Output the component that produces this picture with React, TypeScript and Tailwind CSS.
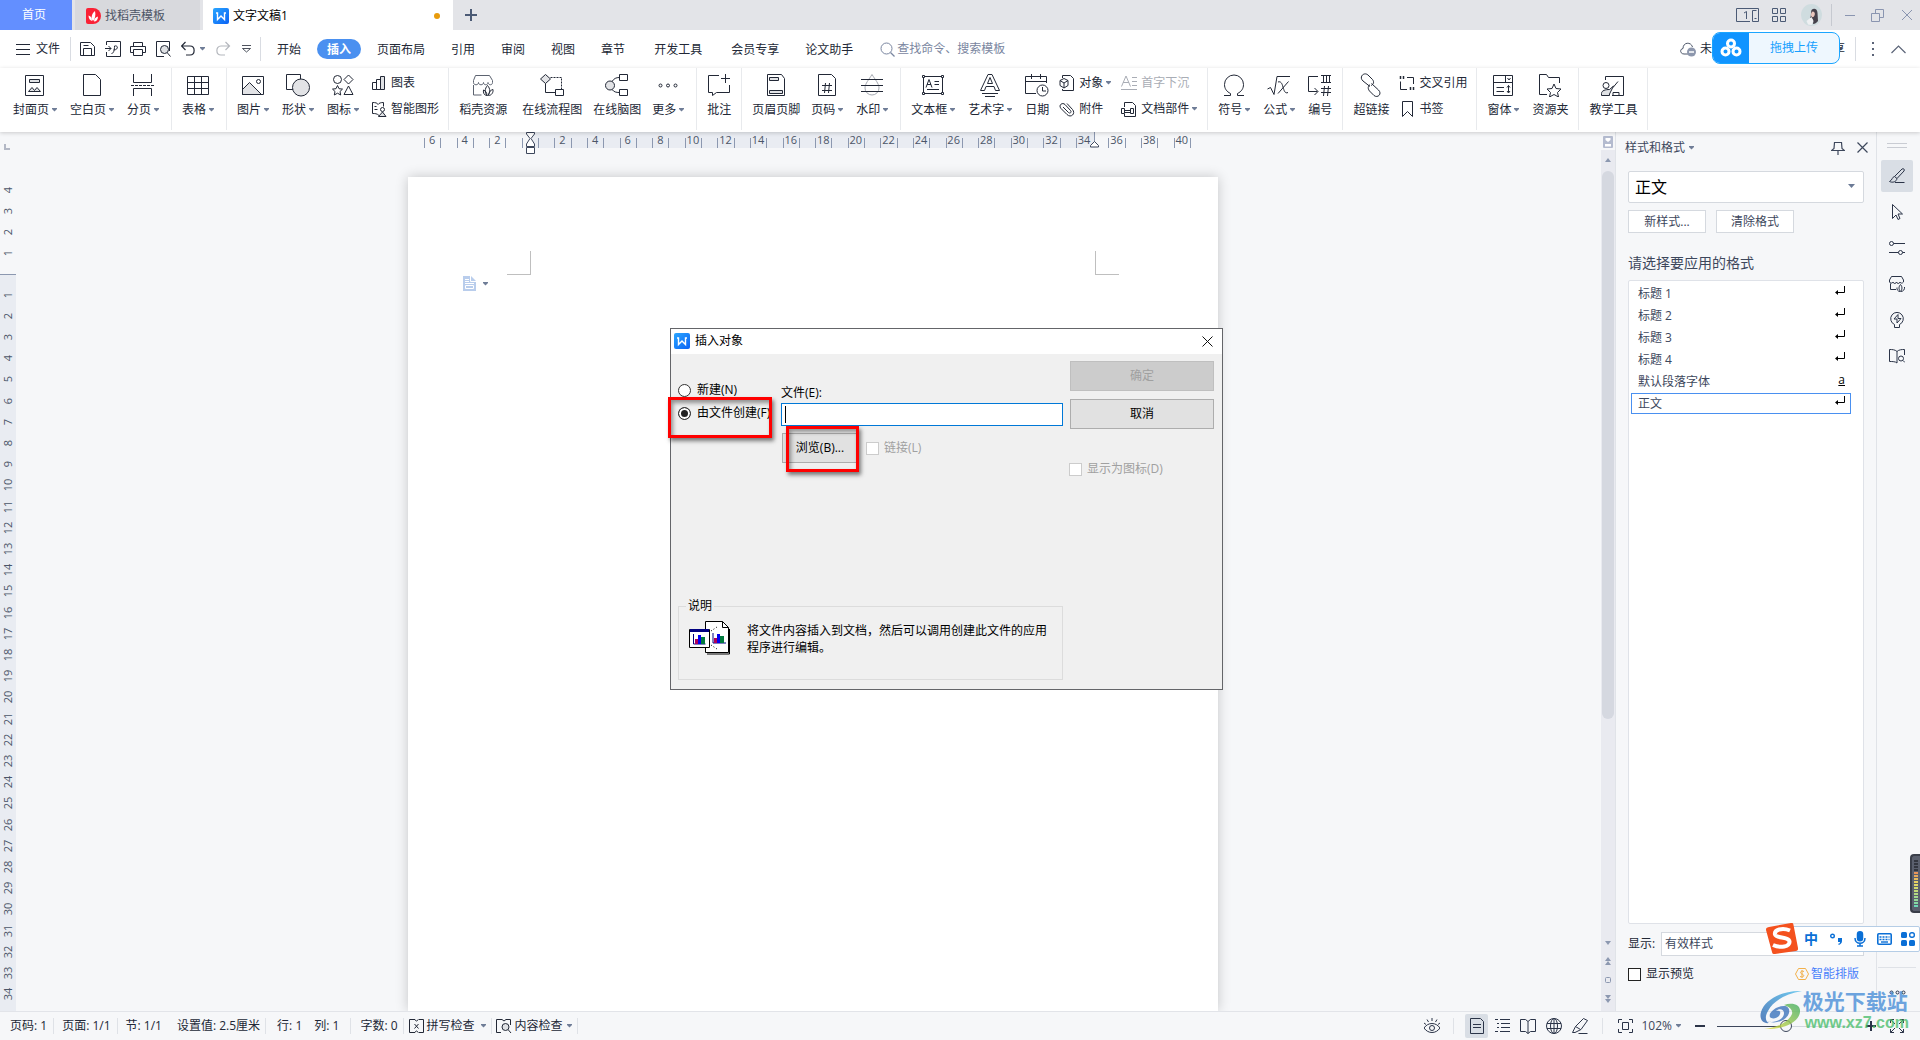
import React, { useState } from "react";
import type { ReactNode } from "react";

type SvgProps = { children: ReactNode; className?: string };

const Icon24 = ({ children, className = "" }: SvgProps) => (
  <svg
    width="24"
    height="24"
    viewBox="0 0 24 24"
    fill="none"
    stroke="currentColor"
    className={"shrink-0 " + className}
  >
    {children}
  </svg>
);

const Icon16 = ({ children, className = "" }: SvgProps) => (
  <svg
    width="16"
    height="16"
    viewBox="0 0 16 16"
    fill="none"
    stroke="currentColor"
    className={"shrink-0 " + className}
  >
    {children}
  </svg>
);

const Caret = ({ className = "" }: { className?: string }) => (
  <svg
    width="5"
    height="4"
    viewBox="0 0 5 4"
    className={"shrink-0 fill-[#6f7d97] " + className}
  >
    <path d="M0 0h5v1L2.5 3.5 0 1z" />
  </svg>
);

const WpsLogo = () => (
  <svg width="16" height="16" viewBox="0 0 16 16" className="shrink-0">
    <defs>
      <linearGradient id="wps" x1="0" y1="0" x2="1" y2="1">
        <stop offset="0" stopColor="#2aa6ff" />
        <stop offset="1" stopColor="#0a62f5" />
      </linearGradient>
    </defs>
    <rect width="16" height="16" rx="2" fill="url(#wps)" />
    <path
      d="M3 5h1.5v6.5L8 8l3.500 3.500V5H13"
      fill="none"
      stroke="#fff"
      strokeWidth="1.4"
    />
  </svg>
);

/* ---------- ribbon ---------- */

type BigProps = {
  label: string;
  caret?: boolean;
  className?: string;
  children: ReactNode;
};

const Big = ({ label, caret, className = "", children }: BigProps) => (
  <button
    type="button"
    className={
      "flex shrink-0 flex-col items-center gap-[5px] pt-[5px] pl-[5px] " +
      (caret ? "pr-2 " : "pr-1.5 ") +
      className
    }
  >
    <Icon24>{children}</Icon24>
    <span className="flex items-center leading-4 whitespace-nowrap">
      {label}
      {caret && <Caret className="ml-[3px]" />}
    </span>
  </button>
);

type SmallProps = {
  label: string;
  caret?: boolean;
  disabled?: boolean;
  children: ReactNode;
};

const Small = ({ label, caret, disabled, children }: SmallProps) => (
  <button
    type="button"
    disabled={disabled}
    className="flex h-5 items-center gap-1 pr-[5px] pl-1 disabled:text-[#a9adb5]"
  >
    <Icon16>{children}</Icon16>
    <span className="flex items-center leading-4 whitespace-nowrap">
      {label}
      {caret && <Caret className="mr-px ml-[3px]" />}
    </span>
  </button>
);

const Group = ({ children }: { children: ReactNode }) => (
  <div className="flex h-[62px] shrink-0 border-r border-[#e8eaed] pr-1 pl-[5px]">
    {children}
  </div>
);

const Stack = ({ children }: { children: ReactNode }) => (
  <div className="flex flex-col items-start gap-1.5 pt-[5px]">{children}</div>
);

const Ribbon = () => (
  <div className="relative z-10 flex h-16 shrink-0 bg-white pl-[3px] shadow-[0_1px_4px_rgba(0,0,0,0.18)]">
    <Group>
      <Big label="封面页" caret>
        <path d="M2.5 2.5h18v20h-18z" />
        <path d="M6.5 6.5h10v3h-10z" fill="#dfe1e4" />
        <path d="M5.5 18.500l3.500-4 2.500 3 2.500-3 3.500 4z" fill="#dfe1e4" />
      </Big>
      <Big label="空白页" caret>
        <path d="M3.5 1.5h12l5 5v16h-17z" />
      </Big>
      <Big label="分页" caret>
        <path d="M2.5 1v8.5h18V1M2.5 23v-7.5h18V23" />
        <path d="M0 12.5h24" strokeDasharray="3 1" />
      </Big>
    </Group>
    <Group>
      <Big label="表格" caret>
        <path d="M1.5 3.5h21v18h-21zM1.5 9.5h21M1.5 15.5h21M8.5 3.5v18M15.5 3.5v18" />
      </Big>
    </Group>
    <Group>
      <Big label="图片" caret>
        <path d="M1.5 16.5l7-7 12 12h-19z" fill="#e2e3e6" />
        <path d="M1.5 3.5h21v18h-21z" />
        <circle cx="17.5" cy="8.5" r="2" />
      </Big>
      <Big label="形状" caret>
        <path d="M.5 1.5h14v15H.5z" />
        <circle cx="15" cy="14.5" r="8.5" fill="#e2e3e6" />
      </Big>
      <Big label="图标" caret>
        <circle cx="6.5" cy="6.5" r="4" />
        <path d="M17.5 2l4.5 4.5-4.5 4.5L13 6.5zM17.5 13l4.500 8.500h-9zM6.500 12.500L8 15.700l3.500.4L9 18.500l.7 3.500-3.200-1.800L3.300 22l.7-3.500-2.500-2.400 3.500-.4z" />
      </Big>
      <Stack>
        <Small label="图表">
          <path d="M1.5 7.5h4v7h-4zM5.5 4.5h4v10h-4zM9.500 1.500h4v13h-4z" />
          <path d="M10 2h3v12h-3z" fill="#dfe1e4" stroke="none" />
        </Small>
        <Small label="智能图形">
          <path d="M8 14.5c-2-2-4-2-6.500-2v-11c3 0 5 .5 5.500 2 1-1.500 3-2 5.500-2v4M3.500 5.500h2M3.500 8.500h3" />
          <circle cx="11.5" cy="8.5" r="2" />
          <path d="M11.5 11l3.500 4.500H7.500z" fill="#dfe1e4" />
        </Small>
      </Stack>
    </Group>
    <Group>
      <Big label="稻壳资源" className="mr-1">
        <path
          d="M2.5 12v10h8M4.500 2.500h14l3 5v2c0 3-4 3-4.500 0 0 3-4.500 3-4.500 0 0 3-5 3-5 0 0 3-5 3-5 0v-2z"
          stroke="#5c6370"
        />
        <path d="M16.5 22.500c-3-2-3-7 0-10 3 3 3 8 0 10zM16 22.500c-3 0-4-3-3.500-5.500 2 .5 3.500 3 3.500 5.500zM17.500 22.500c3 0 5-3 4.500-6-2.500.5-4.500 3-4.500 6z" />
      </Big>
      <Big label="在线流程图">
        <path d="M5.5 1.5l5 4.5-5 4.5-5-4.5z" fill="#e2e3e6" />
        <path d="M5.5 10.5v9h10M15.500 16.500h8v6h-8z" />
        <path d="M10.5 4.5h11v12" strokeDasharray="2 1" />
      </Big>
      <Big label="在线脑图">
        <circle cx="5" cy="12.5" r="4.5" fill="#e2e3e6" />
        <path d="M14.5 1.5h8v6h-8zM14.500 16.500h8v6h-8zM7 8.500c2-3 4-4 7.500-4M7 16.500c2 2.500 4 3 7.500 3" />
      </Big>
      <Big label="更多" caret>
        <circle cx="4.5" cy="12.5" r="1.5" />
        <circle cx="12" cy="12.5" r="1.5" />
        <circle cx="19.5" cy="12.5" r="1.5" />
      </Big>
    </Group>
    <Group>
      <Big label="批注">
        <path d="M12 2.5H1.500v17h4v3l4-3h13V12M18.500 1v9M14 5.500h9" />
      </Big>
    </Group>
    <Group>
      <Big label="页眉页脚">
        <path d="M3.5 1.5h14l3 4v17h-17z" />
        <path d="M5.5 4.5h9v3h-9zM5.500 17.500h13v3h-13z" fill="#e2e3e6" />
      </Big>
      <Big label="页码" caret>
        <path d="M3.5 1.5h13l4 4v17h-17z" />
        <path d="M7 12.5h10M7 17.500h10M10.500 10l-1 10M14.500 10l-1 10" />
      </Big>
      <Big label="水印" caret>
        <path
          d="M12 1.5c3 5 7 9 7 13.500a7 7 0 0 1-14 0c0-4.500 4-8.500 7-13.500z"
          stroke="#a5a9b1"
        />
        <path d="M1 6.5h22M1 12.5h22M1 18.5h22" />
      </Big>
    </Group>
    <Group>
      <Big label="文本框" caret>
        <path d="M2.5 3.5h19v17h-19zM5 14.500l3-8 3 8M6 11.500h4M13.500 8.500H18M13.500 11.500H18M6 16.500h12" />
        <path
          d="M1.5 2.5h2v2h-2zM20.500 2.500h2v2h-2zM1.500 19.500h2v2h-2zM20.500 19.500h2v2h-2z"
          fill="#fff"
        />
      </Big>
      <Big label="艺术字" caret>
        <path d="M2.5 17.5L10 1.5h4l7.500 16h-4L16 13.500H8l-1.500 4zM9.500 10.500L12 4.500l2.500 6zM4 20.500h16M7 23.500h10" />
      </Big>
      <Big label="日期">
        <path d="M11 20.5H.5v-17h21V10M.5 8.500h21M6.500 1v5M15.500 1v5" />
        <circle cx="17.5" cy="17.5" r="5.5" />
        <path d="M17.5 14v4H21" />
      </Big>
      <Stack>
        <Small label="对象" caret>
          <path d="M3.5 3V.5h8l3 3v12h-11V14" />
          <path d="M5 3.5l4 2v5L5 13l-4-2.500v-5zM1 5.500L5 8l4-2.500M5 8v5" />
        </Small>
        <Small label="附件">
          <path d="M4 6l5.500 5.500c1.500 1.500 3.500-.5 2-2L6 3.500C3.500 1-1 4 2 7.500l6 6c4 4 9-1 5.500-5L8 2.500" />
        </Small>
      </Stack>
      <Stack>
        <Small label="首字下沉" disabled>
          <path d="M.5 11.5L5 1l4.500 10.500M2 7.500h6M11 2.500h5M11 6.500h5M11 10.500h5M0 14.500h16" />
        </Small>
        <Small label="文档部件" caret>
          <path d="M3.5 6V1.500h8l3 3v11h-11V13M.5 7.500h3v5h-3zM9.500 7.500h3v5h-3zM3.500 9.500h6v2h-6z" />
        </Small>
      </Stack>
    </Group>
    <Group>
      <Big label="符号" caret>
        <path d="M2 22.5h6.500v-2c-4-2-6-5-6-9a9.500 9.500 0 0 1 19 0c0 4-2 7-6 9v2H22" />
      </Big>
      <Big label="公式" caret>
        <path d="M.5 16l3-1.500 3.500 7 3-18h13M11 9c3-1 4 1.500 5 5s2 7 5 5.500M21.500 8.500l-10.500 12" />
      </Big>
      <Big label="编号">
        <path d="M10 3.5H.5v15h9M6.500 15l3.500 3.500L6.500 22M13 2.500h10M13 9.500h10M15.500 2.500v7M18.500 2.500v7M21.500 2.500v7M13 15.500h10M13 19.500h10M16.500 13l-1 10M20.500 13l-1 10" />
      </Big>
    </Group>
    <Group>
      <Big label="超链接">
        <path d="M11 13.5L4 8C-.5 4 5-1.500 9 2l4.500 4.500c2 2.500 1 5-1.500 6M12.500 10.500l7 6.500c4 4-1 8.500-4.500 5.500l-4.500-4.500c-2-2.500-1.500-5 .5-6.500" />
      </Big>
      <Stack>
        <Small label="交叉引用">
          <path d="M8 2.5h6.500V9M1.500 6.500v8H8" />
          <path d="M1.5 1v3M4.500 1v3M11.500 12v3M14.500 12v3" strokeWidth="1.5" />
        </Small>
        <Small label="书签">
          <path d="M3.5 .5h10v15l-5-5-5 5z" />
        </Small>
      </Stack>
    </Group>
    <Group>
      <Big label="窗体" caret>
        <path d="M2.5 2.5h19v20h-19zM2.500 9.500h19M14.500 2.500v7M16.500 5l1.500 2 1.500-2M5.500 14.500H13M5.500 18.500H13M17.500 12.500v7M16 14.500l1.500-2 1.500 2M16 18l1.500 2 1.500-2" />
      </Big>
      <Big label="资源夹">
        <path d="M9 21.5H1.500v-20h7l2 3h11V10" />
        <path d="M16 11l2 4.500 5 .5-3.500 3.500 1 4.500-4.500-2.500-4.500 2.500 1-4.500L9 16l5-.5z" />
      </Big>
    </Group>
    <Group>
      <Big label="教学工具">
        <path d="M4.5 7V3.500h18v19H11M17 8.500l-5 6M12 22.500v-3h6v3" />
        <circle cx="5" cy="12.5" r="3" />
        <path d="M.5 22.5v-2c0-3 4-4 8-4l4-3.500-4 8v1.500z" fill="#dfe1e4" />
      </Big>
    </Group>
  </div>
);

/* ---------- title bar and menu ---------- */

const TitleBar = () => (
  <header className="flex h-[30px] shrink-0 bg-[#e3e4e8]">
    <button type="button" className="w-[72px] bg-[#638fff] pr-1 text-white">
      首页
    </button>
    <button
      type="button"
      className="ml-[3px] flex w-[125px] items-center gap-1 bg-[#d8d9dd] pt-px pl-[11px] text-[#4d5566]"
    >
      <svg width="15" height="16" viewBox="0 0 15 16">
        <path d="M2 0h5a8 8 0 0 1 0 16H2a2 2 0 0 1-2-2V2a2 2 0 0 1 2-2z" fill="#fa2236" />
        <path
          d="M7 13C5 11 5 6 9 3c1 4 0 8-2 10zM6 13c-2-.5-3.500-2.500-3.500-5.500C5 8 6 10 6 13zM8 13.500c0-2.500 1.500-4.500 4-5 0 3-1.500 5-4 5z"
          fill="#fff"
        />
      </svg>
      找稻壳模板
    </button>
    <button
      type="button"
      className="ml-[3px] flex w-[250px] items-center gap-1 bg-white pt-px pr-[13px] pl-2.5 text-black"
    >
      <WpsLogo />
      <span>文字文稿1</span>
      <span className="ml-auto h-1.5 w-1.5 rounded-full bg-[#e89b0c]" />
    </button>
    <button type="button" aria-label="新建" className="ml-3 text-[#4b5a75]">
      <svg width="12" height="12" viewBox="0 0 12 12" stroke="currentColor" strokeWidth="2">
        <path d="M6 0v12M0 6h12" />
      </svg>
    </button>
    <div className="ml-auto flex items-center pr-[7px] text-[#4b5a75]">
      <svg width="24" height="16" viewBox="0 0 24 16" fill="none" stroke="currentColor">
        <path d="M15 14.5H1.500V1.500h22v13H17.500V3.500h4M9 6l2.500-1.500V12M19.500 11.500h2" />
      </svg>
      <svg
        width="14"
        height="14"
        viewBox="0 0 14 14"
        fill="none"
        stroke="currentColor"
        className="ml-[13px]"
      >
        <path d="M.5.5h5v5h-5zM8.500.5h5v5h-5zM.5 8.500h5v5h-5zM8.500 8.500h5v5h-5z" />
      </svg>
      <svg width="21" height="22" viewBox="0 0 21 22" className="ml-[15px]">
        <ellipse cx="10.5" cy="11" rx="10.5" ry="11" fill="#cfdcdf" />
        <path d="M10.5 6c2.500-2.500 6-1 6 3l.5 8c-1.500 2-3 3-5 3 1-4-1-6-3-6 1.500-2 .5-5 1.500-8z" fill="#45414b" />
        <path d="M11.500 7.500c2 0 3 2 2 4s-2 2-3 1-.5-4 1-5z" fill="#e9c6bd" />
        <path d="M5.500 17l5-4 2 4-2 4-3.500-.5z" fill="#eef0f2" />
      </svg>
      <span className="ml-[9px] h-[22px] w-px bg-[#c6c9d0]" />
      <button type="button" aria-label="最小化" className="ml-3 text-[#8a95b0]">
        <svg width="12" height="12" viewBox="0 0 12 12" stroke="currentColor">
          <path d="M1 6.5h10" />
        </svg>
      </button>
      <button type="button" aria-label="还原" className="ml-[15px] text-[#8a95b0]">
        <svg width="13" height="13" viewBox="0 0 13 13" fill="none" stroke="currentColor">
          <path d="M.5 4.5h8v8h-8zM4.500 4.500v-4h8v8h-4" />
        </svg>
      </button>
      <button type="button" aria-label="关闭" className="ml-[17px] text-[#8a95b0]">
        <svg width="12" height="12" viewBox="0 0 12 12" stroke="currentColor">
          <path d="M1 1l10 10M11 1L1 11" />
        </svg>
      </button>
    </div>
  </header>
);

const tabs = [
  "开始",
  "插入",
  "页面布局",
  "引用",
  "审阅",
  "视图",
  "章节",
  "开发工具",
  "会员专享",
  "论文助手",
];

const MenuBar = () => {
  const [active, setActive] = useState("插入");

  return (
    <div className="relative flex h-[38px] shrink-0 items-center bg-white">
      <button type="button" className="flex items-center gap-1.5 pl-4">
        <svg width="14" height="11" viewBox="0 0 14 11" stroke="currentColor">
          <path d="M0 .5h14M0 5.500h14M0 10.500h14" />
        </svg>
        文件
      </button>
      <span className="ml-2.5 h-6 w-px bg-[#d9dce2]" />
      <button type="button" aria-label="保存" className="ml-[9px]">
        <Icon16>
          <path d="M.5 1.5h10l4 4v9H.5zM3.500 14.500v-7h8v7M3.500 4.500h5" />
        </Icon16>
      </button>
      <button type="button" aria-label="输出为PDF" className="ml-[9px]">
        <Icon16>
          <path d="M1.5 4V.5h14v15h-14V11M0 7.500h6M3.500 5L6 7.500 3.500 10M6.500 12.500c2 0 3-3 3-7.500 4-1 4 4-1 4" />
        </Icon16>
      </button>
      <button type="button" aria-label="打印" className="ml-[9px]">
        <Icon16>
          <path d="M3.5 5.5v-4h9v4M3.500 11.500h-3v-6h15v6h-3M3.500 8.500h9v6h-9z" />
        </Icon16>
      </button>
      <button type="button" aria-label="打印预览" className="ml-2.5">
        <Icon16>
          <path d="M8 15.5H.5V.5h13V10M11.500 12l3 3.500" />
          <circle cx="8.500" cy="8.5" r="4" fill="#dfe1e4" />
        </Icon16>
      </button>
      <button type="button" aria-label="撤销" className="ml-[9px]">
        <Icon16>
          <path d="M4.5 1L.5 5l4 4M.5 5H9c5.500 0 5.500 9 0 9H5" strokeWidth="1.2" />
        </Icon16>
      </button>
      <Caret className="ml-[3px]" />
      <button type="button" aria-label="恢复" className="ml-2.5 text-[#b4b7bd]">
        <Icon16>
          <path d="M10.5 1l4 4-4 4M14.500 5H6C.5 5 .5 14 6 14h4" strokeWidth="1.2" />
        </Icon16>
      </button>
      <button type="button" aria-label="更多" className="ml-[11px]">
        <svg width="9" height="8" viewBox="0 0 9 8" fill="none" stroke="currentColor">
          <path d="M0 .5h9M.5 3.500h8l-4 3.500z" strokeWidth=".8" />
        </svg>
      </button>
      <span className="ml-[9px] h-6 w-px bg-[#d9dce2]" />
      <nav className="ml-[3px] flex items-center">
        {tabs.map((tab) => (
          <button
            key={tab}
            type="button"
            onClick={() => setActive(tab)}
            className={
              "h-5 rounded-full px-2.5 pt-px " +
              (tab === "开发工具" ? "mx-1.5 " : "mx-[3px] ") +
              (tab === active ? "bg-[#4a90f0] font-bold text-white" : "")
            }
          >
            {tab}
          </button>
        ))}
      </nav>
      <div className="ml-3.5 flex items-center gap-0.5 text-[#7a86a0]">
        <svg width="15" height="15" viewBox="0 0 15 15" fill="none" stroke="currentColor">
          <circle cx="6.500" cy="6.5" r="5.5" />
          <path d="M10.5 10.5l4 4" strokeWidth="1.3" />
        </svg>
        <input
          aria-label="搜索"
          placeholder="查找命令、搜索模板"
          className="w-40 outline-none placeholder:text-[#7a86a0]"
        />
      </div>
      <div className="ml-auto flex items-center pr-3.5">
        <Icon16 className="text-[#4b5568]">
          <path d="M8 13H4C0 13-.5 8 3 7.500 3 1 11 .5 12.500 6" />
          <circle cx="11.500" cy="11" r="4.5" fill="#8d97ad" stroke="none" />
          <path d="M9 11h5" stroke="#fff" strokeWidth="1.5" />
        </Icon16>
        <span className="ml-1">未</span>
        <span className="ml-[121px]">享</span>
        <span className="ml-2.5 h-6 w-px bg-[#d9dce2]" />
        <button type="button" aria-label="更多选项" className="ml-4">
          <svg width="2" height="14" viewBox="0 0 2 14" fill="#5b6478">
            <path d="M0 0h2v2H0zM0 6h2v2H0zM0 12h2v2H0z" />
          </svg>
        </button>
        <button type="button" aria-label="收起功能区" className="ml-[17px]">
          <svg width="15" height="9" viewBox="0 0 15 9" fill="none" stroke="#5b6478">
            <path d="M.5 8l7-7 7 7" strokeWidth="1.2" />
          </svg>
        </button>
      </div>
      {/* netdisk drop target floating over the menu row */}
      <button
        type="button"
        className="absolute top-0.5 right-20 z-20 flex h-8 w-32 overflow-hidden rounded-lg border border-[#1aa5ff] bg-[#eef7fe] text-[#16a0ff]"
      >
        <span className="flex h-full w-9 items-center justify-center bg-[#1094ff]">
          <svg width="22" height="20" viewBox="0 0 22 20" fill="none" stroke="#fff" strokeWidth="3">
            <circle cx="11" cy="5.500" r="3.5" />
            <circle cx="5.500" cy="13.5" r="3.5" />
            <circle cx="16.500" cy="13.5" r="3.5" />
          </svg>
        </span>
        <span className="flex h-full flex-1 items-center justify-center">拖拽上传</span>
      </button>
    </div>
  );
};

/* ---------- rulers and document ---------- */

const hMarks = Array.from({ length: 47 }, (_, i) => i - 6);
const topMarks = [4, 3, 2, 1];
const vMarks = Array.from({ length: 34 }, (_, i) => i + 1);

const VerticalRuler = () => (
  <div className="flex w-4 shrink-0 flex-col overflow-hidden text-[11px] text-[#4b5568]">
    <span className="mt-3 ml-1 h-1.5 w-1.5 border-b-2 border-l-2 border-[#b3b8c5]" />
    <div className="mt-[29px] flex h-[85px] shrink-0 flex-col">
      {topMarks.map((n) => (
        <span key={n} className="flex flex-1 items-center justify-center">
          <span className="-rotate-90 leading-3">{n}</span>
        </span>
      ))}
    </div>
    <div className="mt-2.5 flex flex-1 flex-col border-t border-[#8c98b0] bg-[#e9ecf2] pt-[9px]">
      <div className="flex h-[721px] shrink-0 flex-col">
        {vMarks.map((n) => (
          <span key={n} className="flex flex-1 items-center justify-center">
            <span className="-rotate-90 leading-3">{n}</span>
          </span>
        ))}
      </div>
    </div>
  </div>
);

const HorizontalRuler = () => (
  <div className="relative w-[810px] shrink-0">
    <div className="ml-[122px] h-4 w-[565px] bg-[#e9ecf2]" />
    <div className="absolute top-0 left-4 flex h-4 w-[767px] text-[11px] text-[#4b5568]">
      {hMarks.map((n) => (
        <span key={n} className="relative flex flex-1 justify-center">
          {n !== 35 && <i className="absolute bottom-0 left-0 h-2.5 w-px bg-[#8c98b0]" />}
          {n % 2 === 0 && n !== 0 && (
            <span className="w-0 leading-4">
              <span className="flex w-4 -translate-x-1/2 justify-center">{Math.abs(n)}</span>
            </span>
          )}
        </span>
      ))}
      <i className="h-2.5 w-px self-end bg-[#8c98b0]" />
    </div>
    <svg
      width="9"
      height="22"
      viewBox="0 0 9 22"
      fill="#fff"
      stroke="#3d475c"
      className="absolute top-0 left-[118px]"
    >
      <path d="M.5.5h8V2L5 6.500 8.500 12v2.500h-8V12L4 6.500.5 2zM.5 15.500h8v6h-8z" />
    </svg>
    <svg
      width="9"
      height="16"
      viewBox="0 0 9 16"
      fill="#fff"
      stroke="#3d475c"
      className="absolute top-0 left-[682px]"
    >
      <path d="M4.5 0v10" stroke="#8c98b0" />
      <path d="M4.5 9.5l4 4v1.500h-8v-1.500z" />
    </svg>
  </div>
);

const Page = () => (
  <div className="mt-[29px] w-[810px] flex-1 bg-white pt-[74px] shadow-[0_0_12px_rgba(0,0,0,0.2)]">
    <div className="flex justify-between px-[99px]">
      <i className="h-6 w-6 border-r border-b border-[#bfbfbf]" />
      <i className="h-6 w-6 border-b border-l border-[#bfbfbf]" />
    </div>
    <div className="flex items-center gap-[7px] pt-px pl-[55px]">
      <svg width="13" height="15" viewBox="0 0 13 15" fill="#b9cdec">
        <path d="M0 0h8l5 5v10H0z" />
        <path
          d="M7.5 0v5.500H13M2 3.500h4M2 5.500h4M2 7.500h9M2.500 9.500h8v3h-8z"
          fill="none"
          stroke="#fff"
        />
      </svg>
      <Caret />
    </div>
  </div>
);

const Scrollbar = () => (
  <div className="flex w-3.5 shrink-0 flex-col items-center text-[#8c98b0]">
    <svg width="10" height="12" viewBox="0 0 10 12" className="mt-1 shrink-0">
      <rect width="10" height="12" rx="1" fill="#b4bbcf" />
      <path d="M2.5 2h5v2L5 6 2.500 4zM2 8h6v2.500H2z" fill="#fff" />
    </svg>
    <div className="mt-0.5 flex w-full flex-1 flex-col items-center bg-[#e9eaf0] pt-2">
      <svg width="6" height="4" viewBox="0 0 6 4" fill="currentColor">
        <path d="M0 4h6L3 0z" />
      </svg>
      <div className="mt-[9px] h-[548px] w-3 rounded-full bg-[#d5d8e0]" />
      <div className="mt-auto flex flex-col items-center gap-3 pb-2">
        <svg width="6" height="4" viewBox="0 0 6 4" fill="currentColor">
          <path d="M0 0h6L3 4z" />
        </svg>
        <svg width="6" height="8" viewBox="0 0 6 8" fill="currentColor">
          <path d="M0 4h6L3 0zM0 8h6L3 4z" />
        </svg>
        <svg width="6" height="6" viewBox="0 0 6 6" fill="none" stroke="currentColor">
          <rect x=".5" y=".5" width="5" height="5" rx="1" />
        </svg>
        <svg width="6" height="8" viewBox="0 0 6 8" fill="currentColor">
          <path d="M0 0h6L3 4zM0 4h6L3 8z" />
        </svg>
      </div>
    </div>
  </div>
);

/* ---------- insert object dialog ---------- */

const InsertObjectDialog = () => {
  const [source, setSource] = useState("file");
  const [path, setPath] = useState("");

  const radio =
    "h-[13px] w-[13px] shrink-0 appearance-none rounded-full border border-[#333] bg-white checked:bg-[#222] checked:shadow-[inset_0_0_0_2px_white]";
  const check =
    "h-[13px] w-[13px] shrink-0 appearance-none border border-[#ccc] bg-white";

  return (
    <div
      role="dialog"
      aria-label="插入对象"
      className="absolute top-[196px] left-[670px] z-10 flex h-[362px] w-[553px] flex-col border border-[#646569] bg-[#f0f0f0] text-black"
    >
      <div className="flex h-[25px] shrink-0 items-center gap-[5px] bg-white pr-[9px] pb-px pl-[3px]">
        <WpsLogo />
        <span>插入对象</span>
        <button type="button" aria-label="关闭" className="ml-auto">
          <svg width="11" height="11" viewBox="0 0 11 11" stroke="#111">
            <path d="M.5.5l10 10M10.500.5l-10 10" />
          </svg>
        </button>
      </div>
      <div className="flex flex-1 justify-between pr-2 pl-[7px]">
        <div className="flex w-[385px] flex-col">
          <div className="flex">
            <div className="flex w-[103px] flex-col gap-[3px] pt-[26px]">
              <label className="flex h-5 items-center gap-1.5">
                <input
                  type="radio"
                  name="source"
                  className={radio}
                  checked={source === "new"}
                  onChange={() => setSource("new")}
                />
                新建(N)
              </label>
              <label className="flex h-5 w-[92px] items-center gap-1.5 overflow-hidden whitespace-nowrap">
                <input
                  type="radio"
                  name="source"
                  className={radio}
                  checked={source === "file"}
                  onChange={() => setSource("file")}
                />
                由文件创建(F)
              </label>
            </div>
            <div className="flex flex-1 flex-col pt-[31px]">
              <label htmlFor="file-path" className="leading-4">
                文件(E):
              </label>
              <div className="mt-0.5 flex h-[23px] items-center border border-[#0078d7] bg-white pl-[3px]">
                <span className="h-[17px] w-px bg-black" />
                <input
                  id="file-path"
                  value={path}
                  onChange={(e) => setPath(e.target.value)}
                  className="h-full flex-1 outline-none"
                />
              </div>
              <div className="mt-[7px] flex items-center pl-px">
                <button
                  type="button"
                  className="h-[30px] w-[76px] border border-[#adadad] bg-[#e1e1e1]"
                >
                  浏览(B)...
                </button>
                <label className="ml-2 flex items-center gap-[5px] text-[#a0a0a0]">
                  <input type="checkbox" disabled className={check} />
                  链接(L)
                </label>
              </div>
            </div>
          </div>
          <fieldset className="mt-auto mb-[9px] h-[82px] border border-[#dcdcdc] px-2.5">
            <legend className="-ml-[3px] px-0.5 leading-4">说明</legend>
            <div className="flex gap-[17px] pt-[7px]">
              <svg width="41" height="34" viewBox="0 0 41 34" className="shrink-0">
                <path d="M16.5.5h17l6 6v25h-23z" fill="#fff" stroke="#000" />
                <path d="M33.5.5v6h6M40.500 8v25H18" fill="none" stroke="#000" />
                <path d="M.5 8.5h20v18H.5z" fill="#fff" stroke="#000" />
                <path d="M1 8h19v3H1z" fill="#000080" />
                <path d="M4.5 13v10h12M24 12v10h13" fill="none" stroke="#000080" />
                <path d="M6 18h3v5H6zM25 17h3v5h-3z" fill="#b0005a" />
                <path d="M9 14h3v9H9zM28 13h3v9h-3z" fill="#0000f0" />
                <path d="M12 16h4v7h-4zM31 15h4v7h-4z" fill="#007a3d" />
                <path d="M22 10l6-4M22 24l6 4" stroke="#000" strokeDasharray="1 2" />
              </svg>
              <p className="w-[305px] pt-px leading-[17px]">
                将文件内容插入到文档，然后可以调用创建此文件的应用程序进行编辑。
              </p>
            </div>
          </fieldset>
        </div>
        <div className="flex w-36 flex-col pt-[7px]">
          <button
            type="button"
            disabled
            className="h-[30px] border border-[#bfbfbf] bg-[#ccc] text-[#a0a0a0]"
          >
            确定
          </button>
          <button
            type="button"
            className="mt-2 h-[30px] border border-[#adadad] bg-[#e1e1e1]"
          >
            取消
          </button>
          <label className="mt-8 -ml-px flex items-center gap-[5px] text-[#a0a0a0]">
            <input type="checkbox" disabled className={check} />
            显示为图标(D)
          </label>
        </div>
      </div>
      <i className="pointer-events-none absolute top-[68px] -left-[3px] h-[41px] w-[104px] border-3 border-[#f00] shadow-[2px_3px_4px_rgba(0,0,0,0.5),inset_2px_3px_4px_rgba(0,0,0,0.4)]" />
      <i className="pointer-events-none absolute top-[97px] left-[115px] h-[46px] w-[73px] border-3 border-[#f00] shadow-[2px_3px_4px_rgba(0,0,0,0.5),inset_2px_3px_4px_rgba(0,0,0,0.4)]" />
    </div>
  );
};

/* ---------- style pane ---------- */

const styles = ["标题 1", "标题 2", "标题 3", "标题 4", "默认段落字体", "正文"];

const StylePane = () => {
  const [selected, setSelected] = useState("正文");

  return (
    <aside className="flex w-[262px] shrink-0 flex-col border-x border-[#e0e3e8] px-3">
      <div className="flex h-[30px] items-center pt-px text-[#3d475c]">
        <span className="-ml-[3px]">样式和格式</span>
        <Caret className="ml-1" />
        <button type="button" aria-label="固定" className="ml-auto">
          <svg width="14" height="14" viewBox="0 0 14 14" fill="none" stroke="currentColor">
            <path d="M3.5 1.5h7l.5 6 2.500 2H.5l2.500-2zM7 9.500V14" strokeWidth="1.2" />
          </svg>
        </button>
        <button type="button" aria-label="关闭" className="-mr-1 ml-3">
          <svg width="11" height="11" viewBox="0 0 11 11" stroke="currentColor">
            <path d="M.5.5l10 10M10.500.5l-10 10" strokeWidth="1.2" />
          </svg>
        </button>
      </div>
      <div className="relative mt-[9px]">
        <select
          aria-label="当前样式"
          className="h-8 w-full appearance-none rounded-xs border border-[#d5d9df] bg-white pl-1.5 text-base text-black"
        >
          <option>正文</option>
        </select>
        <svg
          width="7"
          height="4"
          viewBox="0 0 7 4"
          className="absolute top-[13px] right-[9px] fill-[#6b7a96]"
        >
          <path d="M0 0h7L3.5 4z" />
        </svg>
      </div>
      <div className="mt-[7px] flex gap-2.5 text-[#3d475c]">
        <button type="button" className="h-[23px] w-[78px] border border-[#d5d9df] bg-white">
          新样式...
        </button>
        <button type="button" className="h-[23px] w-[78px] border border-[#d5d9df] bg-white">
          清除格式
        </button>
      </div>
      <p className="mt-5 text-sm leading-5 text-[#3d475c]">请选择要应用的格式</p>
      <ul className="mt-[7px] flex-1 rounded-xs border border-[#dfe2e8] bg-white pt-0.5 pr-3 pl-0.5 text-[#3d475c]">
        {styles.map((name) => (
          <li key={name} className="flex h-[22px] items-start">
            <button
              type="button"
              onClick={() => setSelected(name)}
              className={
                "flex h-[21px] w-full items-center justify-between border pr-[5px] pl-1.5 " +
                (name === selected ? "border-[#4a90f0]" : "border-transparent")
              }
            >
              <span>{name}</span>
              {name === "默认段落字体" ? (
                <span className="pb-1 leading-3 text-black underline">a</span>
              ) : (
                <svg
                  width="10"
                  height="13"
                  viewBox="0 0 10 13"
                  stroke="#000"
                  fill="none"
                  className="mb-0.5"
                >
                  <path d="M9.5 0v6.500H1" />
                  <path d="M0 6.5l3-2.500v5z" fill="#000" stroke="none" />
                </svg>
              )}
            </button>
          </li>
        ))}
      </ul>
      <div className="mt-2 flex items-center">
        <label htmlFor="show" className="w-[33px] text-[#222836]">
          显示:
        </label>
        <select
          id="show"
          className="h-6 flex-1 appearance-none border border-[#d5d9df] bg-white pl-[3px] text-[#3d475c]"
        >
          <option>有效样式</option>
        </select>
      </div>
      <div className="mt-2 mb-[27px] flex h-5 items-center justify-between">
        <label className="flex items-center gap-[5px] text-[#222836]">
          <input
            type="checkbox"
            className="h-[13px] w-[13px] appearance-none border border-[#222] bg-white"
          />
          显示预览
        </label>
        <a href="#layout" className="mr-[5px] flex items-center gap-0.5 text-[#4a7ffb]">
          <svg width="14" height="14" viewBox="0 0 14 14" fill="none" stroke="#f2b04a">
            <path d="M3.5 1.5h7l3 5.500-3 5.500h-7L.5 7z" />
            <path d="M9 4.5C6 3 4 6 7 7s2 4-2 2.500M7 3v8" />
          </svg>
          智能排版
        </a>
      </div>
    </aside>
  );
};

const SideTools = () => (
  <div className="flex w-[43px] shrink-0 flex-col items-center pr-[3px] text-[#2b3448]">
    <i className="mt-[11px] h-[5px] w-5 border-y border-[#c9ccd3]" />
    <button
      type="button"
      aria-label="样式"
      className="mt-3 flex h-8 w-8 items-center justify-center rounded-xs bg-[#d9dee5]"
    >
      <Icon16>
        <path d="M5.5 8.5L13 1c1.500-1 3 .5 2 2L8 10.500zM5.500 8.500C3 9 3.500 12 .5 13.500c3 1.500 7 .5 7.500-3M6 14.500h9.500" />
      </Icon16>
    </button>
    <div className="mt-3 flex flex-col gap-5">
      <Icon16>
        <path d="M3.5.5v14l3.500-3.500 2 4.500 2-1-2-4.500h4.500z" />
      </Icon16>
      <Icon16>
        <circle cx="2.500" cy="3.5" r="2" />
        <circle cx="11.500" cy="12.5" r="2" />
        <path d="M4.5 3.5H16M0 12.500h9.500M13.500 12.500H16" />
      </Icon16>
      <Icon16>
        <path d="M1.5 7.5v6H7M2.500 .5h10L14.500 4v2c-1 1.500-3 1.500-3.500 0-.5 2-3 2-3.500 0-.5 2-3 2-3.500 0-.5 1.500-3 1.500-3.500 0V4z" />
        <path d="M11.5 15.500c-2-2-2-5 0-7 2 2 2 5 0 7zM11 15.500c-2 0-3.500-2-3-4M12 15.500c2 0 4-2 3.500-4.500" />
      </Icon16>
      <Icon16>
        <path d="M5.5 12.500a6.300 6.300 0 1 1 5 0v3h-5zM9 2.500L5 7h3v4l4-4.500H9z" />
      </Icon16>
      <Icon16>
        <path d="M8 3.5c-2-2-5-2-7.500-2v12c3 0 6 0 7.500 1.500V3.500c2-2 5-2 7.500-2V7" />
        <circle cx="12" cy="10.5" r="2.5" />
        <path d="M14 12.5l2 2" />
      </Icon16>
    </div>
    <i className="mt-auto h-px w-[38px] bg-[#dfe2e7]" />
    <svg
      width="17"
      height="5"
      viewBox="0 0 17 5"
      fill="none"
      stroke="currentColor"
      className="mt-[22px] mb-4"
    >
      <circle cx="2.500" cy="2.5" r="1.5" />
      <circle cx="8.500" cy="2.5" r="1.5" />
      <circle cx="14.500" cy="2.5" r="1.5" />
    </svg>
  </div>
);

/* ---------- status bar ---------- */

const Divider = ({ className }: { className: string }) => (
  <i className={"h-4 w-px shrink-0 bg-[#dfe2e7] " + className} />
);

const StatusBar = () => {
  const [zoom, setZoom] = useState(50);

  return (
    <footer className="flex h-[29px] shrink-0 items-center border-t border-[#e2e4e9] whitespace-nowrap">
      <span className="ml-2.5">页码: 1</span>
      <Divider className="mx-1.5" />
      <span className="ml-0.5">页面: 1/1</span>
      <Divider className="mx-1.5" />
      <span className="ml-0.5">节: 1/1</span>
      <span className="ml-[15px]">设置值: 2.5厘米</span>
      <Divider className="mx-[5px]" />
      <span className="ml-1.5">行: 1</span>
      <span className="ml-3">列: 1</span>
      <Divider className="ml-[11px]" />
      <span className="ml-[9px]">字数: 0</span>
      <Divider className="ml-[5px]" />
      <button type="button" className="ml-[5px] flex items-center gap-0.5">
        <Icon16>
          <path d="M6 1.5H.5v13H6M10 1.500h4.500v13H10M5.500 1.500L7.500 3l2-1.500M5.500 14.500l2-1.500 2 1.500M5.500 6l4 4.500M9.500 6l-4 4.500" />
        </Icon16>
        拼写检查
        <Caret className="ml-1" />
      </button>
      <Divider className="ml-[5px]" />
      <button type="button" className="ml-1 flex items-center gap-[3px]">
        <Icon16>
          <path d="M5 14.5H.5v-13H6L8 3l2-1.500h4.500V7M12 11.500l3 3.500" />
          <circle cx="9.500" cy="9" r="3.5" fill="#dfe1e4" />
        </Icon16>
        内容检查
        <Caret className="ml-px" />
      </button>
      <Divider className="ml-[5px]" />

      <div className="ml-auto flex items-center text-[#2b3448]">
        <button type="button" aria-label="护眼模式">
          <Icon16>
            <path d="M0 10c4-6 12-6 16 0-4 6-12 6-16 0zM8 0v3M3 1.500L4.500 4M13 1.500L11.500 4M0 5l2 1.500M16 5l-2 1.500" />
            <circle cx="8" cy="10" r="2.5" />
          </Icon16>
        </button>
        <Divider className="ml-[13px]" />
        <button
          type="button"
          aria-label="页面视图"
          className="ml-[11px] flex h-6 w-[23px] items-center justify-center rounded-xs bg-[#d9dee5]"
        >
          <Icon16>
            <path d="M1.5.5h10l3 3v12h-13zM4 6.500h8M4 9.500h8" />
          </Icon16>
        </button>
        <button type="button" aria-label="大纲" className="ml-[7px]">
          <Icon16>
            <path d="M0 1.5h3M5 1.500h10M2 5.500h2M6 5.500h9M2 9.500h2M6 9.500h9M0 13.500h3M5 13.500h10" />
          </Icon16>
        </button>
        <button type="button" aria-label="阅读版式" className="ml-[9px]">
          <Icon16>
            <path d="M8 3.5L5.500 1.500h-5v12h5L8 15.500l2.500-2h5v-12h-5zM8 3.500v12" />
          </Icon16>
        </button>
        <button type="button" aria-label="Web版式" className="ml-2.5">
          <Icon16>
            <circle cx="8" cy="8" r="7.5" />
            <ellipse cx="8" cy="8" rx="3.5" ry="7.5" />
            <path d="M1 5.5h14M1 10.500h14M8 .5v15" />
          </Icon16>
        </button>
        <button type="button" aria-label="写作模式" className="ml-2.5">
          <Icon16>
            <path d="M.5 14.5l3-6 8-8 4 2L9 11.500l-6 3zM3.500 8.500l5 3M6.500 15.500h9" />
          </Icon16>
        </button>
        <Divider className="ml-3.5" />
        <button type="button" aria-label="适合页面" className="ml-[15px]">
          <Icon16>
            <path d="M4 1.5H.5V5M11 1.500h3.500V5M.5 11v3.500H4M14.500 11v3.500H11M4.500 4.500h6v7h-6z" />
          </Icon16>
        </button>
        <button type="button" className="ml-[7px] flex items-center gap-1 text-[#3d475c]">
          102%
          <Caret />
        </button>
        <button type="button" aria-label="缩小" className="ml-3.5">
          <svg width="10" height="2" viewBox="0 0 10 2" fill="currentColor">
            <path d="M0 0h10v2H0z" />
          </svg>
        </button>
        <input
          type="range"
          aria-label="显示比例"
          value={zoom}
          onChange={(e) => setZoom(Number(e.target.value))}
          className="ml-3 h-3 w-[138px] appearance-none bg-linear-to-r from-[#3d475c] from-50% to-[#d2d6de] to-50% bg-[length:100%_1px] bg-center bg-no-repeat [&::-webkit-slider-thumb]:h-3 [&::-webkit-slider-thumb]:w-3 [&::-webkit-slider-thumb]:appearance-none [&::-webkit-slider-thumb]:rounded-full [&::-webkit-slider-thumb]:border [&::-webkit-slider-thumb]:border-[#3d475c] [&::-webkit-slider-thumb]:bg-[#f6f7f9]"
        />
        <button type="button" aria-label="放大" className="ml-[11px]">
          <svg width="10" height="10" viewBox="0 0 10 10" fill="currentColor">
            <path d="M4 0h2v4h4v2H6v4H4V6H0V4h4z" />
          </svg>
        </button>
        <button type="button" aria-label="全屏" className="mr-[15px] ml-[13px]">
          <Icon16>
            <path d="M5 1.5H1.500V5M1.500 1.500L6 6M11 1.500h3.500V5M14.500 1.500L10 6M1.500 11v3.500H5M1.500 14.500L6 10M14.500 11v3.500H11M14.500 14.500L10 10" />
          </Icon16>
        </button>
      </div>
    </footer>
  );
};

/* ---------- floating pieces ---------- */

const ImeBar = () => (
  <div className="absolute right-0 bottom-[86px] z-20 flex items-center text-[#0a6fd6]">
    <svg width="32" height="31" viewBox="0 0 32 31" className="z-10 -mr-6">
      <path
        d="M3 4L25 0c2 0 2 0 2.500 2L32 25c0 2 0 2.500-2 3L9 31c-2 0-2.500 0-3-2L0 7c0-2 .5-2.500 3-3z"
        fill="#f4511e"
      />
      <path
        d="M24 7.5C16 4 8 7 9 11.500c1 4 14 2 14.500 7 .5 5-9 7-16.500 3.500"
        fill="none"
        stroke="#fff"
        strokeWidth="4"
      />
    </svg>
    <div className="flex h-[26px] items-center rounded-xs border border-[#b5cde6] bg-white pr-1 pl-[29px]">
      <span className="w-3.5 text-sm leading-5 font-bold">中</span>
      <svg width="12" height="12" viewBox="0 0 12 12" className="ml-3">
        <circle cx="2.500" cy="3" r="1.8" fill="none" stroke="currentColor" strokeWidth="1.4" />
        <path d="M8 5h4v3c0 2-1.500 3.500-3.500 4V10.500c1 0 1.500-.5 1.500-1.500H8z" fill="currentColor" />
      </svg>
      <svg
        width="12"
        height="16"
        viewBox="0 0 12 16"
        fill="none"
        stroke="currentColor"
        strokeWidth="1.5"
        className="ml-3"
      >
        <rect x="3.5" y=".8" width="5" height="9" rx="2.5" fill="currentColor" />
        <path d="M1 7c0 7 10 7 10 0M6 12v3M3 15h6" />
      </svg>
      <svg
        width="15"
        height="12"
        viewBox="0 0 15 12"
        fill="none"
        stroke="currentColor"
        className="ml-[11px]"
      >
        <rect x=".8" y=".8" width="13.4" height="10.4" rx="1" strokeWidth="1.6" />
        <path d="M2.5 4h10M2.500 6.500h10" strokeDasharray="2 1" strokeWidth="1.4" />
        <path d="M4 9h7" strokeWidth="1.4" />
      </svg>
      <svg
        width="14"
        height="14"
        viewBox="0 0 14 14"
        fill="currentColor"
        className="ml-[9px]"
      >
        <rect width="6" height="6" rx="1.5" />
        <rect y="8" width="6" height="6" rx="1.5" />
        <rect x="8" y="8" width="6" height="6" rx="1.5" />
        <rect x="8.7" y=".7" width="4.6" height="4.6" rx="2" fill="none" stroke="currentColor" strokeWidth="1.4" />
      </svg>
    </div>
  </div>
);

const levels = [
  "bg-[#33363f]",
  "bg-[#33363f]",
  "bg-[#33363f]",
  "bg-[#33363f]",
  "bg-[#e8955a]",
  "bg-[#e8a95a]",
  "bg-[#e8bd5e]",
  "bg-[#e8cf62]",
  "bg-[#e0d768]",
  "bg-[#d2da6e]",
  "bg-[#c3da77]",
  "bg-[#b3da82]",
  "bg-[#a3da8d]",
  "bg-[#94da98]",
  "bg-[#85daa3]",
  "bg-[#6dd8b6]",
];

const LevelMeter = () => (
  <div className="absolute right-0 bottom-[127px] z-20 flex h-[59px] w-2.5 flex-col items-center gap-px rounded-l-sm border-2 border-r-0 border-[#3a3e49] bg-[#5a5f6d] pt-1">
    {levels.map((color, i) => (
      <i key={i} className={"h-0.5 w-1 shrink-0 " + color} />
    ))}
  </div>
);

const Watermark = () => (
  <div className="pointer-events-none absolute right-[11px] bottom-[7px] z-20 flex items-center opacity-80">
    <svg width="44" height="42" viewBox="0 0 44 42">
      <defs>
        <linearGradient id="wmBlue" x1="0" y1="1" x2="1" y2="0">
          <stop offset="0" stopColor="#2e62ae" />
          <stop offset="1" stopColor="#4fc0ee" />
        </linearGradient>
        <linearGradient id="wmGreen" x1="0" y1="1" x2="1" y2="0">
          <stop offset="0" stopColor="#e6dc3c" />
          <stop offset="1" stopColor="#3fae62" />
        </linearGradient>
      </defs>
      <path
        d="M43 1C24 0 6 9 2 22c-2 7 2 12 8 11-4-2-4-7-1-12C14 11 26 4 43 1z"
        fill="url(#wmBlue)"
      />
      <path
        d="M8 31c6 3 17-1 17-8 0-4-5-5-8-2 3-1 5 0 4 3-1 4-8 6-10 3-2-4 6-11 14-11 4 0 6 3 5 7-2 7-13 12-22 8z"
        fill="#3d74bd"
      />
      <path
        d="M25 15c9-3 17 0 16 7-1 10-16 18-36 17 12-1 25-7 28-15 1-4-2-7-8-9z"
        fill="url(#wmGreen)"
      />
    </svg>
    <div className="flex flex-col font-bold whitespace-nowrap">
      <span className="text-[21px] leading-6 text-[#4a8fd8]">极光下载站</span>
      <span className="pl-0.5 font-['Liberation_Sans'] text-base leading-5 text-[#4fc070]">
        www.xz7.com
      </span>
    </div>
  </div>
);

const App = () => {
  return (
    <div className="relative flex h-screen flex-col overflow-hidden bg-[#f6f7f9] font-['Open_Sans','Noto_Sans_CJK_SC',sans-serif] text-xs text-[#222836]">
      <TitleBar />
      <MenuBar />
      <Ribbon />
      <main className="relative flex min-h-0 flex-1">
        <VerticalRuler />
        <div className="flex min-w-0 flex-1 flex-col items-center overflow-hidden pl-[9px]">
          <HorizontalRuler />
          <Page />
        </div>
        <Scrollbar />
        <StylePane />
        <SideTools />
        <InsertObjectDialog />
      </main>
      <StatusBar />
      <ImeBar />
      <LevelMeter />
      <Watermark />
    </div>
  );
};

export default App;
